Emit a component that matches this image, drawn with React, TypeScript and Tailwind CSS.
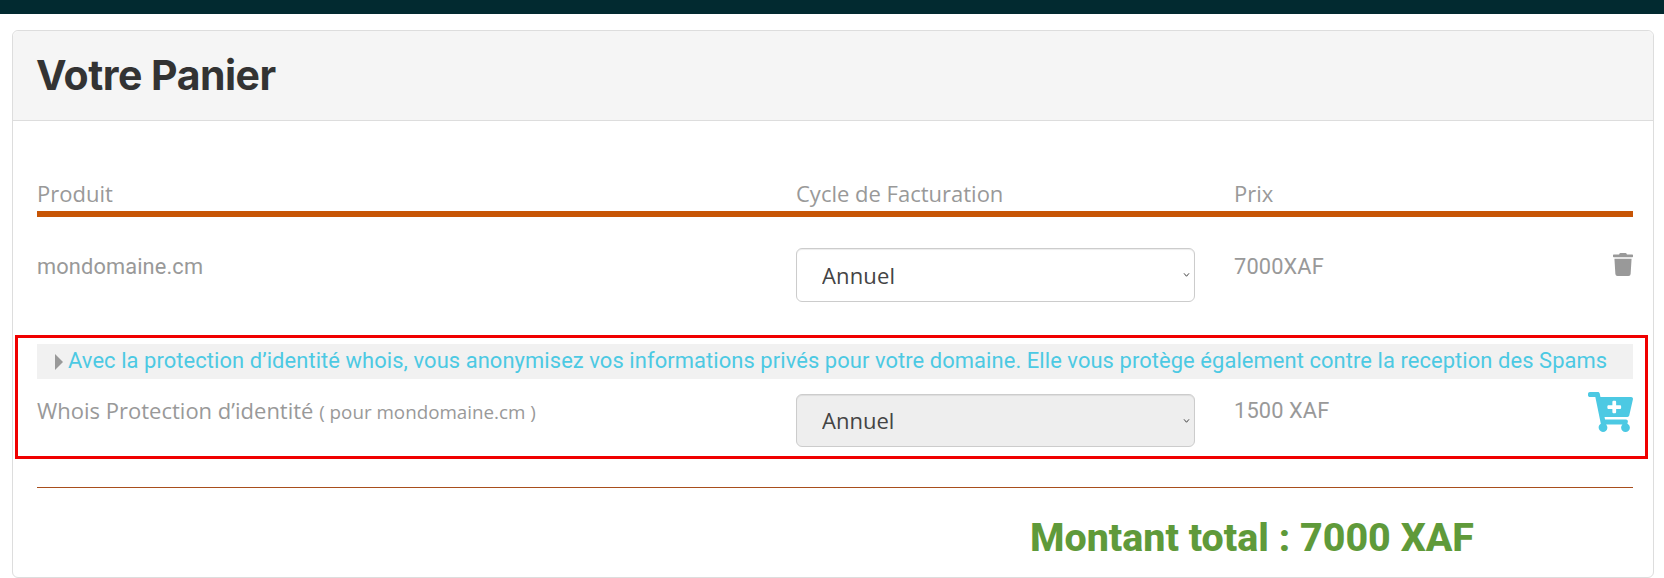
const cols = "grid grid-cols-[759px_438px_1fr]";

function Cycle({ gray }: { gray?: boolean }) {
  return (
    <div className="relative w-[399px]">
      <select
        defaultValue="Annuel"
        className={`block w-full appearance-none rounded-[6px] border border-[#ccc] pl-[25px] text-[22px] text-[#444] [font-family:'Open_Sans',sans-serif] shadow-[inset_0_1px_1px_rgba(0,0,0,0.075)] ${
          gray ? "h-[53px] bg-[#eee]" : "h-[54px] bg-white"
        }`}
      >
        <option>Annuel</option>
      </select>
      <svg viewBox="0 0 8 6" className="pointer-events-none absolute right-[5px] top-1/2 h-[5px] w-[7px] -translate-y-1/2" fill="none" stroke="#444" strokeWidth="1.2">
        <path d="M1 1l3 3.5L7 1" />
      </svg>
    </div>
  );
}

function TrashIcon() {
  return (
    <svg viewBox="0 0 448 512" className="mt-[5px] h-[23px] w-[20px]" fill="#999" preserveAspectRatio="none">
      <path d="M432 32H312l-9.400-18.700A24 24 0 0 0 281.100 0H166.800a23.720 23.720 0 0 0-21.400 13.300L136 32H16A16 16 0 0 0 0 48v32a16 16 0 0 0 16 16h416a16 16 0 0 0 16-16V48a16 16 0 0 0-16-16zM53.200 467a48 48 0 0 0 47.900 45h245.800a48 48 0 0 0 47.900-45L416 128H32z" />
    </svg>
  );
}

function CartPlusIcon() {
  return (
    <svg viewBox="0 0 576 512" className="-mt-[2px] h-[40px] w-[45px]" fill="#4cc9e3" preserveAspectRatio="none">
      <path d="M504.717 320H211.572l6.545 32h268.418c15.401 0 26.816 14.301 23.403 29.319l-5.517 24.276C523.112 414.668 536 433.828 536 456c0 31.202-25.519 56.444-56.824 55.994-29.823-.429-54.350-24.631-55.155-54.447-.44-16.287 6.085-31.049 16.803-41.548H231.176C241.553 426.165 248 440.326 248 456c0 31.813-26.528 57.431-58.670 55.938-28.540-1.325-51.751-24.385-53.251-52.917-1.158-22.034 10.436-41.455 28.051-51.586L93.883 64H24C10.745 64 0 53.255 0 40V24C0 10.745 10.745 0 24 0h102.529c11.401 0 21.228 8.021 23.513 19.190L159.208 64H551.990c15.401 0 26.816 14.301 23.403 29.319l-47.273 208C525.637 312.246 515.923 320 504.717 320zM408 168h-48v-40c0-8.837-7.163-16-16-16h-16c-8.837 0-16 7.163-16 16v40h-48c-8.837 0-16 7.163-16 16v16c0 8.837 7.163 16 16 16h48v40c0 8.837 7.163 16 16 16h16c8.837 0 16-7.163 16-16v-40h48c8.837 0 16-7.163 16-16v-16c0-8.837-7.163-16-16-16z" />
    </svg>
  );
}

export default function App() {
  return (
    <div className="h-[578px] overflow-hidden bg-white [font-family:Roboto,sans-serif]">
      <div className="h-[14px] bg-[#022a30]" />
      <div className="ml-[12px] mt-[16px] h-[548px] w-[1642px] rounded-[6px] border border-[#ddd]">
        <div className="flex h-[90px] items-center rounded-t-[6px] border-b border-[#ddd] bg-[#f5f5f5] pb-[1px] pl-[23px]">
          <h1 className="text-[41px] font-bold leading-none tracking-[-0.5px] text-[#333] [font-family:Inter,sans-serif]">
            Votre Panier
          </h1>
        </div>

        <div className="pl-[24px] pr-[20px]">
          <div className={`${cols} mt-[58px] h-[38px] items-start border-b-[6px] border-[#c75505] text-[22px] leading-[29px] text-[#999] [font-family:'Open_Sans',sans-serif]`}>
            <div>Produit</div>
            <div>Cycle de Facturation</div>
            <div>Prix</div>
          </div>

          <div className={`${cols} mt-[31px] h-[54px] text-[21.8px] tracking-[0.13px] text-[#999]`}>
            <div className="mt-[7px] leading-[24px]">mondomaine.cm</div>
            <div>
              <Cycle />
            </div>
            <div className="flex items-start justify-between">
              <span className="mt-[7px] leading-[24px]">7000XAF</span>
              <TrashIcon />
            </div>
          </div>

          <div className="-ml-[22px] -mr-[15px] mt-[33px] h-[124px] border-[3px] border-[#f00000] pl-[19px] pr-[12px] pt-[6px]">
            <div className="flex h-[35px] items-center bg-[#f1f1f1] pl-[18px] text-[21.9px] tracking-[0.09px] text-[#4cc9e3]">
              <span className="mr-[5px] h-0 w-0 shrink-0 border-y-[8px] border-l-[8px] border-y-transparent border-l-[#999]" />
              <span className="whitespace-nowrap">
                Avec la protection d’identité whois, vous anonymisez vos informations privés pour votre domaine. Elle vous protège également contre la reception des Spams
              </span>
            </div>
            <div className={`${cols} mt-[15px]`}>
              <div className="mt-[2px] whitespace-nowrap text-[22px] leading-[28px] text-[#999] [font-family:'Open_Sans',sans-serif]">
                Whois Protection d’identité <span className="text-[18.8px]">( pour mondomaine.cm )</span>
              </div>
              <div>
                <Cycle gray />
              </div>
              <div className="flex items-start justify-between">
                <span className="mt-[5px] text-[21.8px] tracking-[0.13px] leading-[24px] text-[#999]">1500 XAF</span>
                <CartPlusIcon />
              </div>
            </div>
          </div>

          <div className="mt-[28px] h-px bg-[#a84e1c]" />

          <div className="mt-[27px] pl-[993px] text-[39.4px] font-extrabold leading-[46px] text-[#5f9a3a]">
            Montant total : 7000 XAF
          </div>
        </div>
      </div>
    </div>
  );
}
